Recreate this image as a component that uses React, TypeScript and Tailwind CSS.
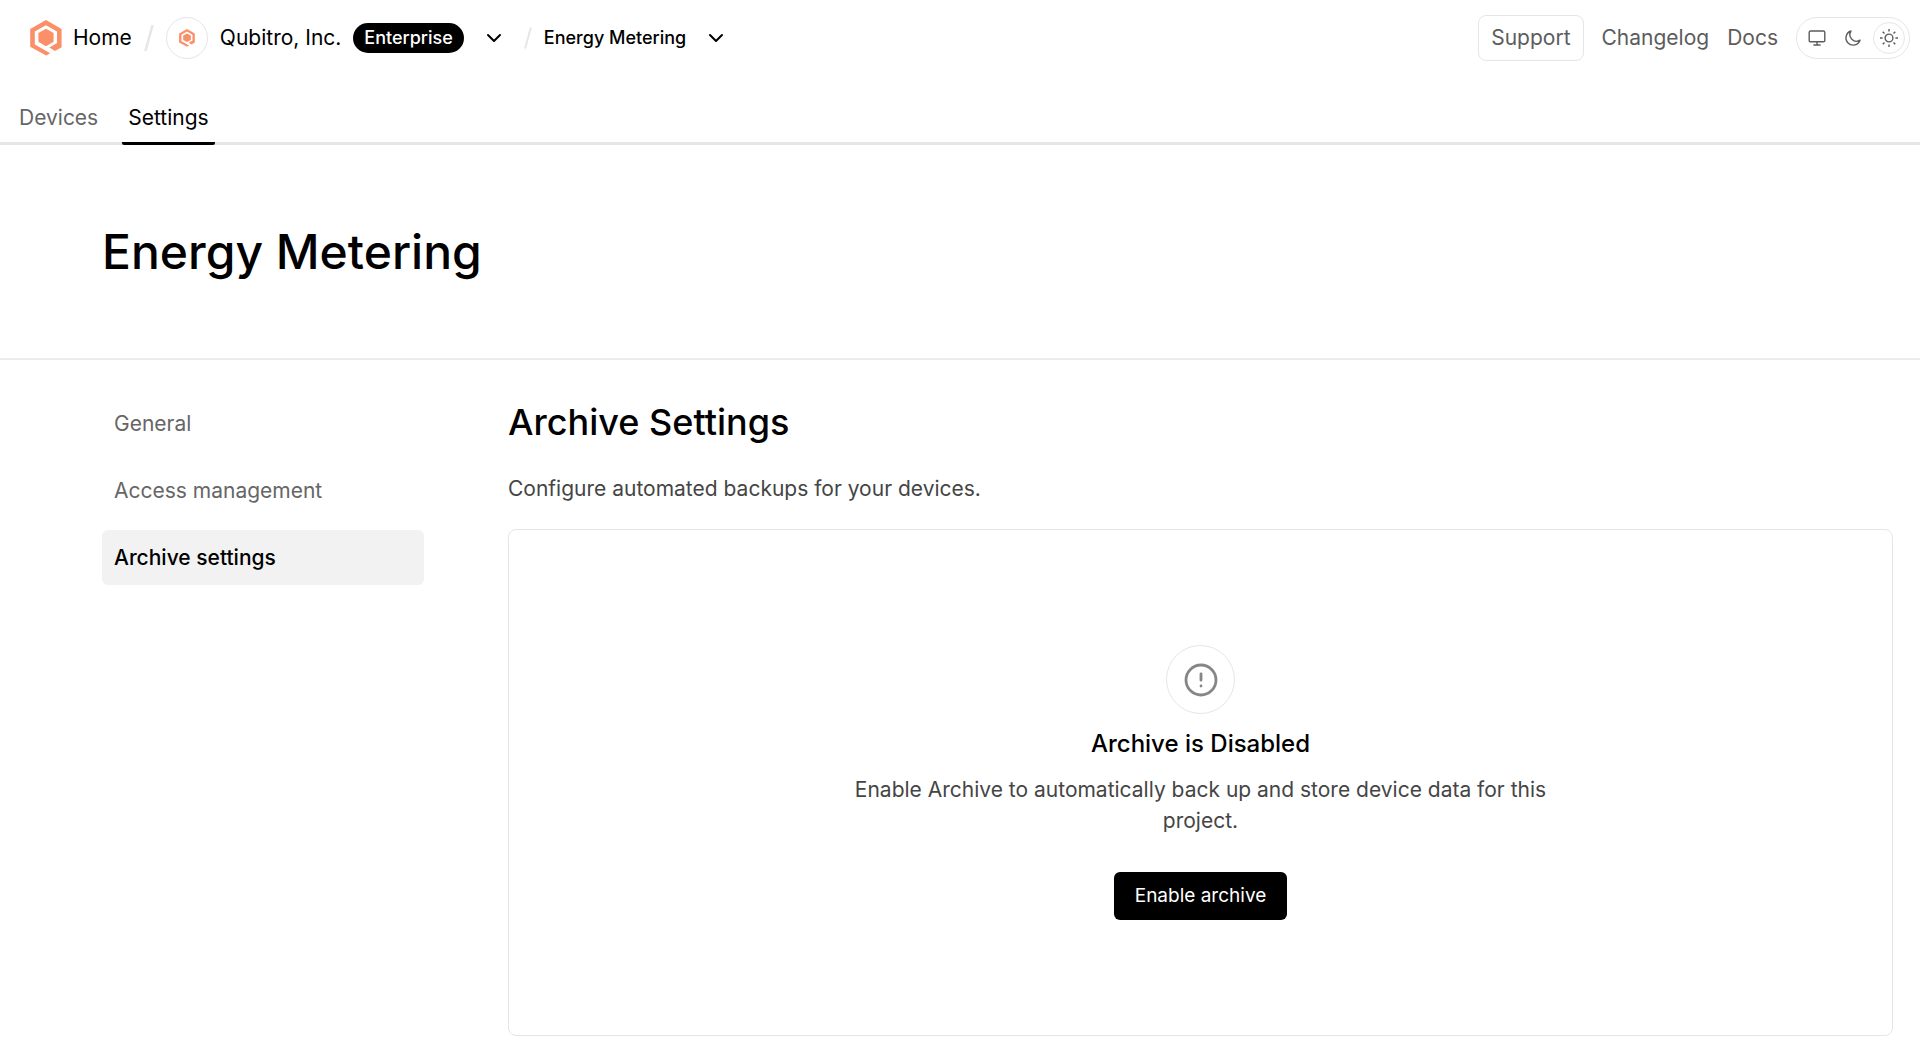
import React, { useState } from 'react';
import { ChevronDown } from 'lucide-react';

type Theme = 'system' | 'dark' | 'light';

interface NavItem {
  id: string;
  label: string;
}

const tabs: NavItem[] = [
  { id: 'devices', label: 'Devices' },
  { id: 'settings', label: 'Settings' },
];

const sections: NavItem[] = [
  { id: 'general', label: 'General' },
  { id: 'access', label: 'Access management' },
  { id: 'archive', label: 'Archive settings' },
];

const Logo: React.FC<{ className?: string }> = ({ className }) => (
  <svg viewBox="0 0 32 36" className={className} fill="#fb8f67" aria-hidden="true">
    <path d="M16 8.8 23.6 13V21.8L16 26.2 8.4 21.8V13Z" />
    <path d="M16 0 31.6 9V27.2L25 31 19.4 27.6 27 23V11.6L16 5.2 4.8 11.6V24.4L20.2 33.2 16.2 35.6 0.2 26.8V9Z" />
  </svg>
);

const Slash: React.FC<{ className?: string }> = ({ className }) => (
  <svg viewBox="0 0 10 26" className={className} fill="none" stroke="#e6e6e6" strokeWidth="2.5" aria-hidden="true">
    <path d="M8.6 0 1.4 26" />
  </svg>
);

const SystemIcon = () => (
  <svg viewBox="0 0 18 18" className="size-[18px]" fill="none" stroke="currentColor" strokeWidth="1.4" aria-hidden="true">
    <rect x="1.2" y="2" width="15.6" height="10.8" rx="1.4" />
    <path d="M9 12.8V16M5.4 16H12.6" />
  </svg>
);

const MoonIcon = () => (
  <svg viewBox="0 0 18 18" className="size-[18px]" fill="none" stroke="currentColor" strokeWidth="1.4" strokeLinejoin="round" aria-hidden="true">
    <path d="M7 2A7.2 7.2 0 1 0 16 11.2 6.6 6.6 0 0 1 7 2Z" />
  </svg>
);

const SunIcon = () => (
  <svg viewBox="0 0 18 18" className="size-[18px]" fill="none" stroke="currentColor" strokeWidth="1.4" aria-hidden="true">
    <circle cx="9" cy="9" r="3.9" />
    <path d="M9 0V2.6M9 15.4V18M0 9H2.6M15.4 9H18M2.7 2.7 4.5 4.5M13.5 13.5 15.3 15.3M2.7 15.3 4.5 13.5M13.5 4.5 15.3 2.7" />
  </svg>
);

const AlertIcon = () => (
  <svg viewBox="0 0 34 34" className="size-[34px]" fill="none" stroke="#868686" strokeWidth="2.8" strokeLinecap="round" aria-hidden="true">
    <circle cx="17" cy="17" r="15" />
    <path d="M17 10.8V17.2M17 23V23.1" />
  </svg>
);

const themes: { id: Theme; label: string; icon: React.ReactNode }[] = [
  { id: 'system', label: 'System theme', icon: <SystemIcon /> },
  { id: 'dark', label: 'Dark theme', icon: <MoonIcon /> },
  { id: 'light', label: 'Light theme', icon: <SunIcon /> },
];

const ThemeSwitch: React.FC = () => {
  const [theme, setTheme] = useState<Theme>('light');

  return (
    <div className="flex h-[42px] items-center gap-1 rounded-full border border-[#e6e6e6] px-1">
      {themes.map(({ id, label, icon }) => (
        <button
          key={id}
          type="button"
          aria-label={label}
          onClick={() => setTheme(id)}
          className={`flex size-8 items-center justify-center rounded-full border ${theme === id ? 'border-[#e6e6e6]' : 'border-transparent'}`}
        >
          {icon}
        </button>
      ))}
    </div>
  );
};

const Header: React.FC = () => (
  <header className="flex h-[75px] items-center justify-between pl-[30px] pr-[10px]">
    <div className="flex items-center">
      <a href="#home" className="flex items-center gap-[11px]">
        <Logo className="h-[36px] w-8" />
        <span>Home</span>
      </a>
      <Slash className="mx-3 h-[26px] w-[10px]" />
      <a href="#org" className="flex items-center gap-3">
        <span className="flex size-[42px] items-center justify-center rounded-full border border-[#e6e6e6]">
          <Logo className="h-[18px] w-4" />
        </span>
        <span>Qubitro, Inc.</span>
        <span className="flex h-[30px] items-center rounded-full bg-black px-[11px] text-lg font-medium text-white">Enterprise</span>
      </a>
      <button type="button" aria-label="Switch organization" className="ml-[18px]">
        <ChevronDown className="size-6" />
      </button>
      <Slash className="ml-[18px] mr-3 h-[22px] w-2" />
      <a href="#project" className="text-lg font-medium">Energy Metering</a>
      <button type="button" aria-label="Switch project" className="ml-[18px]">
        <ChevronDown className="size-6" />
      </button>
    </div>
    <nav className="flex items-center gap-[18px] text-[#5c5c5c]">
      <button type="button" className="h-[46px] rounded-lg border border-[#e6e6e6] px-3">Support</button>
      <a href="#changelog">Changelog</a>
      <a href="#docs">Docs</a>
      <ThemeSwitch />
    </nav>
  </header>
);

const App: React.FC = () => {
  const [tab, setTab] = useState('settings');
  const [section, setSection] = useState('archive');

  return (
    <div className="min-h-screen bg-white font-['Inter',sans-serif] text-[21px] leading-8 text-black">
      <Header />
      <nav className="flex h-[70px] items-end gap-[18px] border-b-3 border-[#e6e6e6] px-[13px]">
        {tabs.map(({ id, label }) => (
          <button
            key={id}
            type="button"
            onClick={() => setTab(id)}
            className={`-mb-[3px] rounded-xs border-b-3 px-1.5 pb-2 ${tab === id ? 'border-black' : 'border-transparent text-[#666666]'}`}
          >
            {label}
          </button>
        ))}
      </nav>

      <div className="flex h-[215px] items-center border-b-2 border-[#ebebeb] px-[102px]">
        <h1 className="text-5xl font-medium">Energy Metering</h1>
      </div>

      <main className="flex gap-[84px] pl-[102px] pr-[27px]">
        <nav className="flex w-[322px] shrink-0 flex-col gap-3 pt-9">
          {sections.map(({ id, label }) => (
            <a
              key={id}
              href={`#${id}`}
              onClick={() => setSection(id)}
              className={`flex h-[55px] items-center rounded-md px-3 ${section === id ? 'bg-[#f2f2f2] font-medium' : 'text-[#666666]'}`}
            >
              {label}
            </a>
          ))}
        </nav>
        <section className="min-w-0 grow pt-9">
          <h2 className="text-4xl leading-[52px] font-medium">Archive Settings</h2>
          <p className="mt-[25px] text-[#454545]">Configure automated backups for your devices.</p>
          <div className="mt-6 flex flex-col items-center rounded-lg border border-[#e6e6e6] px-6 py-[115px] text-center">
            <span className="flex size-[69px] items-center justify-center rounded-full border border-[#e6e6e6]">
              <AlertIcon />
            </span>
            <h3 className="mt-3 text-2xl leading-9 font-medium">Archive is Disabled</h3>
            <p className="mt-3 max-w-[700px] leading-[31px] text-[#454545]">
              Enable Archive to automatically back up and store device data for this project.
            </p>
            <button type="button" className="mt-9 h-12 rounded-md bg-black px-[21px] text-[19px] text-white">
              Enable archive
            </button>
          </div>
        </section>
      </main>
    </div>
  );
};

export default App;
